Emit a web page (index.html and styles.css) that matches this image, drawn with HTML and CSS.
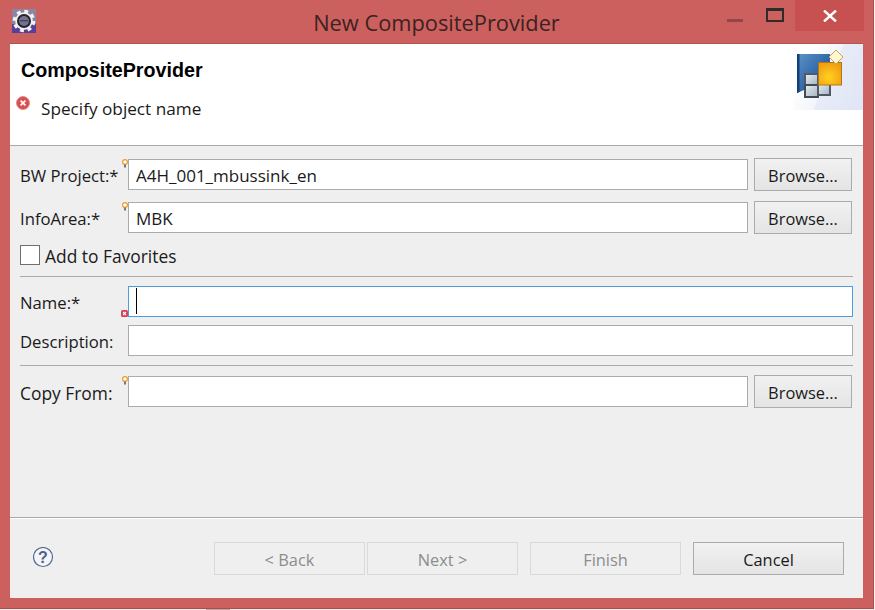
FILE: index.html
```html
<!DOCTYPE html>
<html lang="en">

<head>
    <meta charset="UTF-8">
    <link rel="stylesheet" href="styles.css">
    <title>New CompositeProvider</title>
</head>

<body>
    <div id="window">
        <div id="titlebar">
            <svg class="app-icon" width="24" height="24" viewBox="0 0 24 24">
                <rect width="24" height="24" fill="#5a3f9a"/>
                <rect width="24" height="15" fill="#8d83a3"/>
                <circle cx="12" cy="12" r="9.6" fill="none" stroke="#f4f4f4" stroke-width="3.4" stroke-dasharray="3.8 3.74"/>
                <circle cx="12" cy="12" r="8.8" fill="#f0f0f0"/>
                <circle cx="12" cy="12" r="7" fill="#23232e"/>
                <circle cx="12" cy="12" r="5" fill="#75728f"/>
                <rect x="8" y="11" width="8" height="1.4" fill="#45435f"/>
            </svg>
            <div id="title">New CompositeProvider</div>
            <div class="win-btns">
                <div class="win-min"></div>
                <div class="win-max"></div>
                <div class="win-close">
                    <svg width="14" height="12" viewBox="0 0 14 12">
                        <path d="M1 0.5L13 11.5M13 0.5L1 11.5" stroke="#fff" stroke-width="2.4" fill="none"/>
                    </svg>
                </div>
            </div>
        </div>

        <div id="dialog">
            <div id="banner">
                <div class="banner-text">
                    <h1>CompositeProvider</h1>
                    <div class="message">
                        <svg class="msg-icon" width="15" height="15" viewBox="0 0 15 15">
                            <circle cx="7" cy="7" r="6.5" fill="#d6504f" stroke="#e58a86"/>
                            <path d="M4.6 4.6L9.4 9.4M9.4 4.6L4.6 9.4" stroke="#fff" stroke-width="1.7"/>
                        </svg>
                        <span>Specify object name</span>
                    </div>
                </div>
                <div class="banner-image">
                    <svg width="50" height="52" viewBox="795 48 50 52">
                        <defs>
                            <linearGradient id="blue" x1="0" y1="0" x2="1" y2="1">
                                <stop offset="0" stop-color="#5f93c8"/>
                                <stop offset="0.55" stop-color="#2f68a8"/>
                                <stop offset="1" stop-color="#0f3c78"/>
                            </linearGradient>
                            <linearGradient id="cell" x1="0" y1="0" x2="1" y2="1">
                                <stop offset="0" stop-color="#e6edf3"/>
                                <stop offset="1" stop-color="#a5b4c2"/>
                            </linearGradient>
                            <radialGradient id="gold" cx="0.45" cy="0.65" r="0.7">
                                <stop offset="0" stop-color="#ffd21f"/>
                                <stop offset="1" stop-color="#f09a10"/>
                            </radialGradient>
                        </defs>
                        <path d="M797 54H830V66H818V74H804V90L797 93Z" fill="url(#blue)"/>
                        <path d="M797 54H799.5V92L797 93Z" fill="#123f78"/>
                        <rect x="805" y="74" width="13" height="11" fill="url(#cell)" stroke="#4f5a65" stroke-width="2"/>
                        <rect x="805" y="85" width="13" height="12" fill="url(#cell)" stroke="#414b55" stroke-width="2"/>
                        <rect x="818" y="84" width="12" height="11" fill="url(#cell)" stroke="#4f5a65" stroke-width="2"/>
                        <rect x="818.5" y="62.5" width="23" height="22.5" fill="url(#gold)" stroke="#b5761a"/>
                        <path d="M836 50L843 57L836 64L829 57Z" fill="#fff6d2" stroke="#c9a558"/>
                    </svg>
                </div>
            </div>

            <div id="content">
                <div class="row row-first">
                    <label class="lbl">BW Project:*</label>
                    <div class="field-wrap">
                        <svg class="mark bulb" width="6" height="9" viewBox="0 0 6 9">
                            <circle cx="3" cy="3" r="2.4" fill="#fff" stroke="#ec9a2b" stroke-width="1.2"/>
                            <rect x="2" y="5.5" width="2" height="3" fill="#777"/>
                        </svg>
                        <input class="fields" type="text" value="A4H_001_mbussink_en">
                    </div>
                    <button class="btn browse">Browse...</button>
                </div>
                <div class="row row-second">
                    <label class="lbl">InfoArea:*</label>
                    <div class="field-wrap">
                        <svg class="mark bulb" width="6" height="9" viewBox="0 0 6 9">
                            <circle cx="3" cy="3" r="2.4" fill="#fff" stroke="#ec9a2b" stroke-width="1.2"/>
                            <rect x="2" y="5.5" width="2" height="3" fill="#777"/>
                        </svg>
                        <input class="fields" type="text" value="MBK">
                    </div>
                    <button class="btn browse">Browse...</button>
                </div>
                <div class="check-row">
                    <span class="check"></span>
                    <span class="check-text">Add to Favorites</span>
                </div>
                <div class="sep sep-a"></div>
                <div class="row row-name">
                    <label class="lbl">Name:*</label>
                    <div class="field-wrap">
                        <svg class="mark cross" width="7" height="7" viewBox="0 0 7 7">
                            <rect width="7" height="7" rx="1.5" fill="#d8405a"/>
                            <path d="M2 2L5 5M5 2L2 5" stroke="#fff" stroke-width="1.1"/>
                        </svg>
                        <div class="fields focused"><span class="caret"></span></div>
                    </div>
                </div>
                <div class="row row-desc">
                    <label class="lbl">Description:</label>
                    <div class="field-wrap"><input class="fields" type="text"></div>
                </div>
                <div class="sep sep-b"></div>
                <div class="row row-copy">
                    <label class="lbl lbl-copy">Copy From:</label>
                    <div class="field-wrap">
                        <svg class="mark bulb" width="6" height="9" viewBox="0 0 6 9">
                            <circle cx="3" cy="3" r="2.4" fill="#fff" stroke="#ec9a2b" stroke-width="1.2"/>
                            <rect x="2" y="5.5" width="2" height="3" fill="#777"/>
                        </svg>
                        <input class="fields" type="text">
                    </div>
                    <button class="btn browse">Browse...</button>
                </div>
            </div>

            <div id="footer">
                <svg class="help" width="21" height="21" viewBox="0 0 21 21">
                    <circle cx="10" cy="10" r="9.5" fill="#f4f5f8" stroke="#5a6b92" stroke-width="1.2"/>
                    <text x="10" y="15.5" text-anchor="middle" class="help-mark">?</text>
                </svg>
                <div class="nav-btns">
                    <button class="btn nav off">&lt; Back</button>
                    <button class="btn nav off next">Next &gt;</button>
                    <button class="btn nav off finish">Finish</button>
                    <button class="btn nav cancel">Cancel</button>
                </div>
            </div>
        </div>
    </div>
    <div class="below"></div>
</body>

</html>
```

FILE: styles.css
```css
html,
body {
    margin: 0;
    height: 100%;
}

body {
    background-color: #f5f0ee;
    font-family: "Open Sans", "Noto Sans", sans-serif;
    font-size: 17px;
    color: #1a1a1a;
    overflow: hidden;
}

button,
input {
    font-family: inherit;
    font-size: 100%;
    margin: 0;
}

#window {
    width: 874px;
    height: 609px;
    box-sizing: border-box;
    padding: 0 10px 10px 10px;
    background-color: #CB605E;
    border-bottom: 1px solid #a84f4e;
    border-right: 1px solid #a84f4e;
    display: flex;
    flex-direction: column;
}

#titlebar {
    height: 43px;
    display: flex;
    position: relative;
    flex-shrink: 0;
}

.app-icon {
    margin: 9px 0 0 2px;
}

#title {
    position: absolute;
    left: 0;
    right: 0;
    top: 8px;
    text-align: center;
    font-size: 21.8px;
    line-height: 30px;
    color: #3c2222;
}

.win-btns {
    margin-left: auto;
    margin-right: -1px;
    display: flex;
    position: relative;
    height: 31px;
}

.win-min {
    width: 16px;
    height: 3px;
    margin: 19px 23px 0 0;
    background-color: #8f4847;
}

.win-max {
    width: 14px;
    height: 9px;
    margin: 8px 11px 0 0;
    border: 2px solid #2f2b2b;
    border-top-width: 3px;
}

.win-close {
    width: 69px;
    height: 31px;
    background-color: #C75050;
    display: flex;
    align-items: center;
    justify-content: center;
}

#dialog {
    flex: 1;
    background-color: #efefef;
    display: flex;
    flex-direction: column;
    border-top: 1px solid #b35452;
}

#banner {
    height: 101px;
    background-color: #fff;
    border-bottom: 1px solid #a9a9a9;
    display: flex;
    flex-shrink: 0;
}

.banner-text {
    flex: 1;
}

h1 {
    font-size: 19.7px;
    font-family: "Liberation Sans", sans-serif;
    margin: 15px 0 0 11px;
    color: #000;
    line-height: 22px;
}

.message {
    display: flex;
    margin-top: 15px;
    margin-left: 6px;
    line-height: 26px;
    font-size: 17.2px;
}

.msg-icon {
    margin-right: 10px;
}

.banner-image {
    width: 70px;
    height: 66px;
    background: linear-gradient(115deg, #fff 20%, #f3f5fb 50%, #e8ecf8 51%, #dfe5f5 100%);
}

.banner-image svg {
    display: block;
    margin: 4px 0 0 2px;
}

#content {
    flex: 1;
    padding: 0 10px;
}

.row {
    display: flex;
    align-items: center;
}

.lbl {
    width: 108px;
    flex-shrink: 0;
    font-size: 16.7px;
    padding-top: 2px;
}

.lbl-copy {
    font-size: 17.4px;
}

.field-wrap {
    flex: 1;
    position: relative;
}

.fields {
    display: block;
    width: 100%;
    height: 31px;
    box-sizing: border-box;
    padding: 2px 7px 0;
    background-color: #fff;
    border: 1px solid #ababab;
    color: #1a1a1a;
}

.focused {
    border-color: #4a9de0;
    padding-top: 1px;
}

.caret {
    display: block;
    width: 1px;
    height: 26px;
    background-color: #000;
}

.mark {
    position: absolute;
    display: block;
}

.bulb {
    left: -6px;
    top: 0;
}

.cross {
    left: -7px;
    bottom: 0;
}

.btn {
    height: 33px;
    box-sizing: border-box;
    background: linear-gradient(180deg, #f1f1f1, #e4e4e4);
    border: 1px solid #ababab;
    color: #1a1a1a;
    padding: 2px 0 0;
    font-size: 16.4px;
}

.browse {
    width: 98px;
    margin: 0 1px 0 6px;
}

.row-first {
    margin-top: 12px;
}

.row-second {
    margin-top: 10px;
}

.check-row {
    display: flex;
    align-items: center;
    margin-top: 10px;
    height: 22px;
}

.check {
    width: 18px;
    height: 18px;
    background-color: #fff;
    border: 1px solid #707070;
    margin-right: 5px;
}

.check-text {
    font-size: 17.4px;
    padding-top: 1px;
}

.sep {
    height: 1px;
    background-color: #a9a9a9;
}

.sep-a {
    margin-top: 10px;
}

.row-name {
    margin-top: 9px;
}

.row-desc {
    margin-top: 8px;
}

.sep-b {
    margin-top: 9px;
}

.row-copy {
    margin-top: 9px;
}

#footer {
    height: 81px;
    box-sizing: border-box;
    border-top: 1px solid #a9a9a9;
    box-shadow: inset 0 1px 0 #fff;
    display: flex;
    flex-shrink: 0;
    padding: 24px 19px 0 23px;
}

.help {
    margin-top: 5px;
}

.help-mark {
    font-family: "Liberation Sans", sans-serif;
    font-size: 16px;
    font-weight: bold;
    fill: #4e5f85;
}

.nav-btns {
    margin-left: auto;
    display: flex;
}

.nav {
    width: 151px;
}

.off {
    border-color: #d9d9d9;
    background: #efefef;
    color: #8d8d8d;
}

.next {
    margin-left: 2px;
}

.finish {
    margin-left: 12px;
}

.cancel {
    margin-left: 12px;
}

.below {
    width: 24px;
    height: 1px;
    margin-left: 206px;
    background-color: #b8a6a2;
}
```
